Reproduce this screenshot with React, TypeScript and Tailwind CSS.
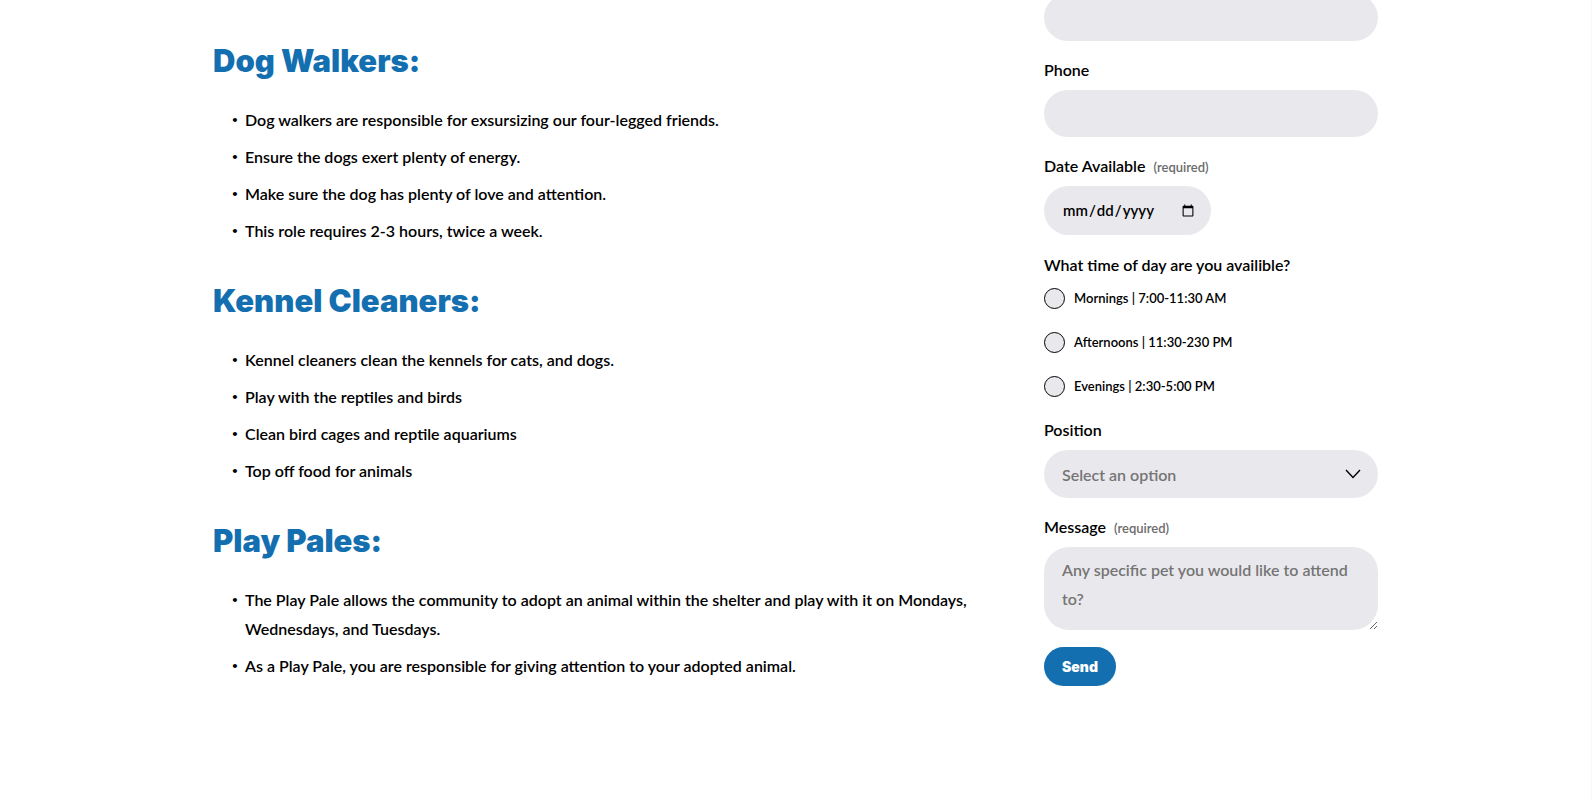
import type { ReactNode } from "react";

const roles = [
  {
    title: "Dog Walkers:",
    duties: [
      "Dog walkers are responsible for exsursizing our four-legged friends.",
      "Ensure the dogs exert plenty of energy.",
      "Make sure the dog has plenty of love and attention.",
      "This role requires 2-3 hours, twice a week.",
    ],
  },
  {
    title: "Kennel Cleaners:",
    duties: [
      "Kennel cleaners clean the kennels for cats, and dogs.",
      "Play with the reptiles and birds",
      "Clean bird cages and reptile aquariums",
      "Top off food for animals",
    ],
  },
  {
    title: "Play Pales:",
    duties: [
      "The Play Pale allows the community to adopt an animal within the shelter and play with it on Mondays, Wednesdays, and Tuesdays.",
      "As a Play Pale, you are responsible for giving attention to your adopted animal.",
    ],
  },
];

const times = ["Mornings | 7:00-11:30 AM", "Afternoons | 11:30-230 PM", "Evenings | 2:30-5:00 PM"];

function FieldLabel({ id, required, children }: { id: string; required?: boolean; children: ReactNode }) {
  return (
    <label htmlFor={id} className="mb-[6px] flex h-7 items-baseline gap-2 leading-7">
      <span>{children}</span>
      {required && <span className="text-[13px] text-[#6b6b6b]">(required)</span>}
    </label>
  );
}

export default function App() {
  return (
    <div className="min-h-screen border-r border-[#f8f8f8] bg-white px-6 font-['Lato',sans-serif] text-[16px] leading-[29px] font-semibold text-black">
      <main className="mx-auto flex max-w-[1165px] items-start justify-between gap-16 overflow-hidden">
        <div className="max-w-[768px] flex-1 pt-10">
          {roles.map((role) => (
            <section key={role.title} className="mb-[35px]">
              <h2 className="font-['Inter',sans-serif] text-[31px] leading-[42px] font-black text-[#146fb0]">{role.title}</h2>
              <ul className="mt-[23px] space-y-2">
                {role.duties.map((duty) => (
                  <li key={duty} className="flex pl-[19px]">
                    <span className="w-[13px] shrink-0 text-[10px]" aria-hidden="true">•</span>
                    <span>{duty}</span>
                  </li>
                ))}
              </ul>
            </section>
          ))}
        </div>

        <form className="-mt-[6px] w-[334px] shrink-0" onSubmit={(e) => e.preventDefault()}>
          <input type="email" aria-label="Email" className="block h-[47px] w-full rounded-full bg-[#e9e9ed] px-[18px] outline-none" />

          <div className="mt-[15px]">
            <FieldLabel id="phone">Phone</FieldLabel>
            <input id="phone" type="tel" className="block h-[47px] w-full rounded-full bg-[#e9e9ed] px-[18px] outline-none" />
          </div>

          <div className="mt-[15px]">
            <FieldLabel id="date" required>Date Available</FieldLabel>
            <input
              id="date"
              type="date"
              className="block h-[49px] w-[167px] rounded-full bg-[#e9e9ed] pr-4 pl-[18px] text-[15px] outline-none [&::-webkit-calendar-picker-indicator]:size-[14px] [&::-webkit-calendar-picker-indicator]:p-0"
            />
          </div>

          <fieldset className="mt-4">
            <legend className="leading-7">What time of day are you availible?</legend>
            <div className="mt-[9px] space-y-[23px]">
              {times.map((time) => (
                <label key={time} className="flex items-center gap-[9px] text-[13px] leading-[21px]">
                  <input type="radio" name="time" className="size-[21px] appearance-none rounded-full border border-black bg-[#e9e9ed] checked:bg-[#146fb0]" />
                  <span>{time}</span>
                </label>
              ))}
            </div>
          </fieldset>

          <div className="mt-[19px]">
            <FieldLabel id="position">Position</FieldLabel>
            <div className="relative">
              <select id="position" className="block h-12 w-full appearance-none rounded-full bg-[#e9e9ed] px-[18px] text-[#757575] outline-none">
                <option>Select an option</option>
              </select>
              <svg className="pointer-events-none absolute top-[19px] right-[17px] h-[10px] w-4" viewBox="0 0 16 10" fill="none" stroke="black" strokeWidth="1.4" aria-hidden="true">
                <path d="M1 1 L8 8.5 L15 1" />
              </svg>
            </div>
          </div>

          <div className="mt-[15px]">
            <FieldLabel id="message" required>Message</FieldLabel>
            <textarea
              id="message"
              placeholder="Any specific pet you would like to attend to?"
              className="block h-[83px] w-full resize-y rounded-[25px] bg-[#e9e9ed] px-[18px] py-2 outline-none placeholder:text-[#757575]"
            />
          </div>

          <button type="submit" className="mt-[17px] block h-[39px] rounded-full bg-[#146fb0] px-[18px] font-['Inter',sans-serif] text-[14px] leading-5 font-black text-white">
            Send
          </button>
        </form>
      </main>
    </div>
  );
}
